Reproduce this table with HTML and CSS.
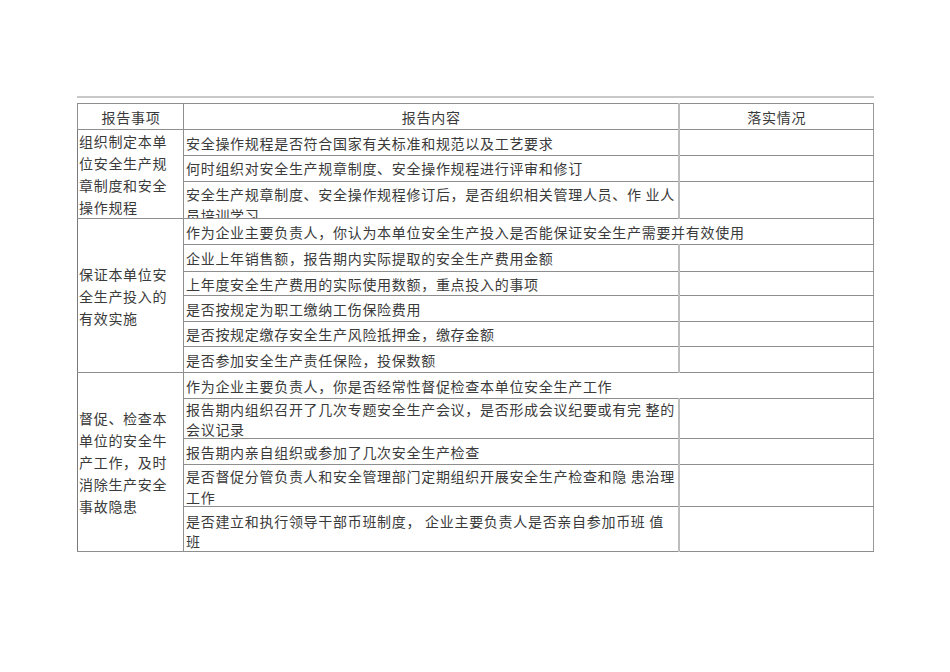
FILE: index.html
```html
<!DOCTYPE html>
<html lang="zh-CN">
<head>
<meta charset="utf-8">
<title>报告事项</title>
<link rel="stylesheet" href="styles.css">
</head>
<body>
<div class="page">
  <div class="rule"></div>
  <table class="report">
    <colgroup><col class="c1"><col class="c2"><col class="c3"></colgroup>
    <thead>
      <tr class="h26"><th>报告事项</th><th>报告内容</th><th class="last">落实情况</th></tr>
    </thead>
    <tbody>
      <tr class="h26">
        <td rowspan="3" class="item top">组织制定本单<br>位安全生产规<br>章制度和安全<br>操作规程</td>
        <td>安全操作规程是否符合国家有关标准和规范以及工艺要求</td><td class="last"></td>
      </tr>
      <tr class="h25"><td>何时组织对安全生产规章制度、安全操作规程进行评审和修订</td><td class="last"></td></tr>
      <tr class="h37"><td class="ml"><div class="clip">安全生产规章制度、安全操作规程修订后，是否组织相关管理人员、作 业人<br>员培训学习</div></td><td class="last"></td></tr>

      <tr class="h26">
        <td rowspan="6" class="item mid">保证本单位安<br>全生产投入的<br>有效实施</td>
        <td colspan="2" class="span">作为企业主要负责人，你认为本单位安全生产投入是否能保证安全生产需要并有效使用</td>
      </tr>
      <tr class="h27"><td>企业上年销售额，报告期内实际提取的安全生产费用金额</td><td class="last"></td></tr>
      <tr class="h24"><td>上年度安全生产费用的实际使用数额，重点投入的事项</td><td class="last"></td></tr>
      <tr class="h26"><td>是否按规定为职工缴纳工伤保险费用</td><td class="last"></td></tr>
      <tr class="h25"><td>是否按规定缴存安全生产风险抵押金，缴存金额</td><td class="last"></td></tr>
      <tr class="h26"><td>是否参加安全生产责任保险，投保数额</td><td class="last"></td></tr>

      <tr class="h26">
        <td rowspan="5" class="item mid">督促、检查本<br>单位的安全牛<br>产工作，及时<br>消除生产安全<br>事故隐患</td>
        <td colspan="2" class="span">作为企业主要负责人，你是否经常性督促检查本单位安全生产工作</td>
      </tr>
      <tr class="h40"><td class="ml"><div class="two a">报告期内组织召开了几次专题安全生产会议，是否形成会议纪要或有完 整的<br>会议记录</div></td><td class="last"></td></tr>
      <tr class="h26"><td>报告期内亲自组织或参加了几次安全生产检查</td><td class="last"></td></tr>
      <tr class="h42"><td class="ml"><div class="two b">是否督促分管负责人和安全管理部门定期组织开展安全生产检查和隐 患治理<br>工作</div></td><td class="last"></td></tr>
      <tr class="h45"><td class="ml"><div class="two c">是否建立和执行领导干部币班制度， 企业主要负责人是否亲自参加币班 值<br>班</div></td><td class="last"></td></tr>
    </tbody>
  </table>
</div>
</body>
</html>
```
FILE: styles.css
```css
html, body {
  margin: 0;
  padding: 0;
  background: #ffffff;
}
.page {
  padding: 96px 0 0 77px;
  font-family: "Noto Sans CJK SC", "Noto Sans", sans-serif;
  color: #3a3a3a;
}
.rule {
  width: 797px;
  height: 2px;
  background: #c8c8c8;
  margin-bottom: 5px;
}
.report {
  border-collapse: collapse;
  table-layout: fixed;
  width: 796px;
  font-size: 14px;
  letter-spacing: 0.7px;
}
.c1 { width: 106px; }
.c2 { width: 495px; }
.c3 { width: 195px; }
.report th,
.report td {
  border: 1px solid #8e8e8e;
  padding: 0 1px 0 2px;
  font-weight: normal;
  line-height: 20px;
  vertical-align: middle;
  white-space: nowrap;
  overflow: visible;
}
.report th { text-align: center; }
.report td.last,
.report th.last {
  border-left: 2px solid #bdbdbd;
  border-right: 1px solid #9a9a9a;
}
.report td.item {
  border-left: 1px solid #7a7a7a;
  padding-left: 1px;
  line-height: 22px;
  white-space: normal;
}
.report td.top { vertical-align: top; }
.report td.mid { vertical-align: middle; }
.report td.ml { vertical-align: top; padding-top: 0; padding-bottom: 0; }
.clip {
  height: 36px;
  overflow: hidden;
  padding-top: 2px;
  box-sizing: border-box;
  line-height: 21px;
}
.two { overflow: hidden; box-sizing: border-box; }
.two.a { height: 39px; line-height: 20px; }
.two.b { height: 41px; line-height: 21px; padding-top: 1px; }
.two.c { height: 44px; line-height: 20px; padding-top: 4px; }
.h24 { height: 24px; }
.h25 { height: 25px; }
.h26 { height: 26px; }
.h27 { height: 27px; }
.h37 { height: 37px; }
.h40 { height: 40px; }
.h42 { height: 42px; }
.h45 { height: 45px; }
```
